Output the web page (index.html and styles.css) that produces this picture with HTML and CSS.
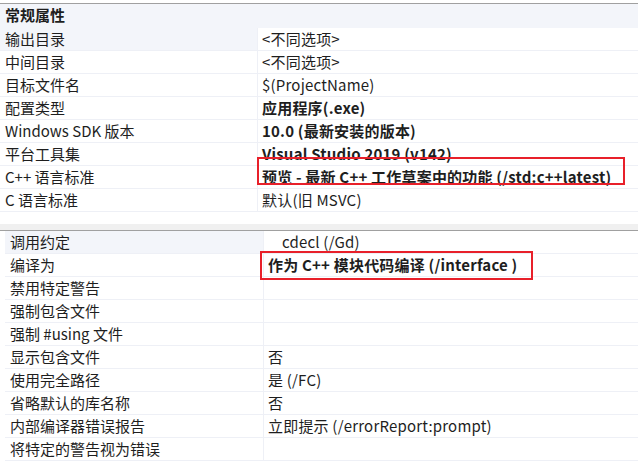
FILE: index.html
```html
<!DOCTYPE html>
<html lang="zh-CN">
<head>
<meta charset="utf-8">
<link rel="stylesheet" href="styles.css">
</head>
<body>
<div class="pane top">
  <div class="header">常规属性</div>
  <div class="grid">
    <div class="k hl">输出目录</div><div class="v">&lt;不同选项&gt;</div>
    <div class="k">中间目录</div><div class="v">&lt;不同选项&gt;</div>
    <div class="k">目标文件名</div><div class="v">$(ProjectName)</div>
    <div class="k">配置类型</div><div class="v b">应用程序(.exe)</div>
    <div class="k">Windows SDK 版本</div><div class="v b">10.0 (最新安装的版本)</div>
    <div class="k">平台工具集</div><div class="v b">Visual Studio 2019 (v142)</div>
    <div class="k">C++ 语言标准</div><div class="v b rel">预览 - 最新 C++ 工作草案中的功能 (/std:c++latest)<span class="mark mark-a"></span></div>
    <div class="k">C 语言标准</div><div class="v">默认(旧 MSVC)</div>
  </div>
</div>
<div class="gap"></div>
<div class="pane bottom">
  <div class="grid">
    <div class="k hl">调用约定</div><div class="v indent">cdecl (/Gd)</div>
    <div class="k">编译为</div><div class="v b rel">作为 C++ 模块代码编译 (/interface )<span class="mark mark-b"></span></div>
    <div class="k">禁用特定警告</div><div class="v"></div>
    <div class="k">强制包含文件</div><div class="v"></div>
    <div class="k">强制 #using 文件</div><div class="v"></div>
    <div class="k">显示包含文件</div><div class="v">否</div>
    <div class="k">使用完全路径</div><div class="v">是 (/FC)</div>
    <div class="k">省略默认的库名称</div><div class="v">否</div>
    <div class="k">内部编译器错误报告</div><div class="v">立即提示 (/errorReport:prompt)</div>
    <div class="k">将特定的警告视为错误</div><div class="v"></div>
  </div>
</div>
</body>
</html>
```
FILE: styles.css
```css
html, body {
  margin: 0;
  padding: 0;
  background: #ffffff;
  width: 638px;
  height: 465px;
  overflow: hidden;
}
body {
  font-family: "Noto Sans CJK SC", "Noto Sans", sans-serif;
  font-size: 15px;
  color: #1e1e1e;
}
.top {
  margin-top: 3px;
  border-top: 1px solid #a0a0a0;
}
.header {
  height: 24px;
  line-height: 22px;
  background: #f3f5fa;
  font-weight: bold;
  padding-left: 5px;
}
.grid {
  display: grid;
  grid-template-columns: 258px 1fr;
}
.bottom .grid {
  margin-left: 5px;
  grid-template-columns: 259px 1fr;
}
.k, .v {
  height: 22px;
  line-height: 21px;
  border-bottom: 1px solid #eef0f6;
  white-space: nowrap;
}
.k {
  padding-left: 5px;
  border-right: 1px solid #eef0f6;
}
.v {
  padding-left: 4px;
  letter-spacing: 0.2px;
}
.hl {
  background: #f3f5fa;
}
.b {
  font-weight: bold;
}
.indent {
  padding-left: 18px;
}
.rel {
  position: relative;
}
.gap {
  height: 12px;
  border-bottom: 6px solid #f0f0f0;
}
.bottom {
  border-top: 1px solid #a0a0a0;
}
.mark {
  position: absolute;
  border: 2px solid #e8202a;
  box-sizing: border-box;
}
.mark-a {
  left: -1px;
  top: -9px;
  width: 368px;
  height: 28px;
}
.mark-b {
  left: -4px;
  top: -3px;
  width: 273px;
  height: 29px;
}
```
